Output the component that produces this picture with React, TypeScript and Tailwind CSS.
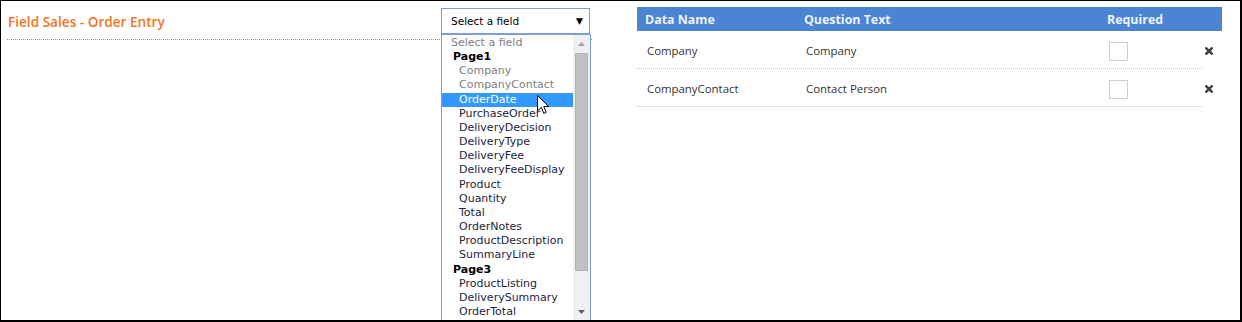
import React from "react";

// Field list shown in the open dropdown
type Opt = { label: string; kind: "placeholder" | "group" | "used" | "item" | "active" };

const options: Opt[] = [
  { label: "Select a field", kind: "placeholder" },
  { label: "Page1", kind: "group" },
  { label: "Company", kind: "used" },
  { label: "CompanyContact", kind: "used" },
  { label: "OrderDate", kind: "active" },
  { label: "PurchaseOrder", kind: "item" },
  { label: "DeliveryDecision", kind: "item" },
  { label: "DeliveryType", kind: "item" },
  { label: "DeliveryFee", kind: "item" },
  { label: "DeliveryFeeDisplay", kind: "item" },
  { label: "Product", kind: "item" },
  { label: "Quantity", kind: "item" },
  { label: "Total", kind: "item" },
  { label: "OrderNotes", kind: "item" },
  { label: "ProductDescription", kind: "item" },
  { label: "SummaryLine", kind: "item" },
  { label: "Page3", kind: "group" },
  { label: "ProductListing", kind: "item" },
  { label: "DeliverySummary", kind: "item" },
  { label: "OrderTotal", kind: "item" },
];

const rows = [
  { name: "Company", question: "Company" },
  { name: "CompanyContact", question: "Contact Person" },
];

function optionClass(kind: Opt["kind"]) {
  switch (kind) {
    case "placeholder":
      return "pl-[9px] text-[#808080]";
    case "group":
      return "pl-[11px] font-bold text-black";
    case "used":
      return "pl-[17px] text-[#808080]";
    case "active":
      return "pl-[17px] bg-[#3399ff] text-white";
    default:
      return "pl-[17px] text-[#1e1e3c]";
  }
}

function Cursor() {
  return (
    <svg className="absolute left-[536px] top-[94px]" width="13" height="20" viewBox="0 0 13 20">
      <path
        d="M0.5 0.5 L0.5 16 L4.3 12.4 L6.8 18.4 L9.2 17.4 L6.8 11.6 L11.8 11.6 Z"
        fill="white"
        stroke="black"
        strokeWidth="1"
        strokeLinejoin="round"
      />
    </svg>
  );
}

function RemoveIcon() {
  return (
    <svg width="8" height="8" viewBox="0 0 8 8">
      <path d="M1.3 1.3 L6.7 6.7 M6.7 1.3 L1.3 6.7" stroke="#3f3f3f" strokeWidth="2.4" strokeLinecap="square" />
    </svg>
  );
}

export default function App() {
  return (
    <div className="relative w-[1242px] h-[322px] overflow-hidden bg-white border-l border-t border-r-2 border-b-2 border-black">
      <div className="flex items-start">
        {/* Left: title + field picker */}
        <div className="ml-[6px] mt-[6px] w-[585px] h-[33px] flex items-start border-b border-dotted border-[#e0782c]">
          <h1 className="w-[434px] pl-[1px] pt-[5px] text-[13.6px] leading-[20px] font-semibold text-[#f47521] font-['Open_Sans',sans-serif]">
            Field Sales - Order Entry
          </h1>
          <div className="mt-[1px] w-[149px] h-[26px] border border-[#7a9fd6] flex items-center justify-between pl-[9px] pr-[6px] pt-[2px] font-['DejaVu_Sans',sans-serif] text-[10.5px] text-black">
            <span>Select a field</span>
            <span className="text-[9px]">▼</span>
          </div>
        </div>

        {/* Right: selected fields table */}
        <div className="ml-[45px] mt-[6px] w-[585px] font-['Open_Sans',sans-serif]">
          <div className="flex h-[24px] items-center pt-[2px] bg-[#4a84d3] text-[12.4px] font-bold text-[#eef3fb]">
            <div className="w-[159px] pl-[8px]">Data Name</div>
            <div className="w-[303px] pl-[8px]">Question Text</div>
            <div className="pl-[8px]">Required</div>
          </div>
          {rows.map((r) => (
            <div key={r.name} className="flex h-[38px]">
              <div className="flex w-[565px] items-center pt-[3px] border-b border-dotted border-[#c4c4c4] text-[11.4px] text-[#333]">
                <div className="w-[159px] pl-[10px]">{r.name}</div>
                <div className="w-[303px] pl-[10px]">{r.question}</div>
                <div className="pl-[10px]">
                  <div className="w-[19px] h-[19px] border border-[#cfcfcf] bg-white" />
                </div>
              </div>
              <div className="flex flex-1 items-center pl-[3px] pt-[1px]">
                <RemoveIcon />
              </div>
            </div>
          ))}
        </div>
      </div>

      {/* Open dropdown list */}
      <div className="absolute left-[440px] top-[33px] w-[150px] h-[300px] border border-[#7a9fd6] bg-white flex font-['DejaVu_Sans',sans-serif] text-[11px]">
        <ul className="flex-1 pt-[1px]">
          {options.map((o) => (
            <li key={o.label} className={`h-[14.16px] leading-[14.16px] whitespace-nowrap ${optionClass(o.kind)}`}>
              {o.label}
            </li>
          ))}
        </ul>
        <div className="w-[17px] bg-[#f0f0f0] flex flex-col items-center">
          <div className="h-[17px] flex items-center justify-center">
            <svg width="7" height="4" viewBox="0 0 7 4">
              <path d="M0 4 L3.5 0 L7 4 Z" fill="#a3a3a3" />
            </svg>
          </div>
          <div className="mt-[1px] w-[13px] h-[218px] bg-[#c1c1c1] border border-[#b4b4b4]" />
          <div className="mt-[32px] h-[17px] flex items-center justify-center">
            <svg width="7" height="4" viewBox="0 0 7 4">
              <path d="M0 0 L3.5 4 L7 0 Z" fill="#606060" />
            </svg>
          </div>
        </div>
      </div>

      <Cursor />
    </div>
  );
}
